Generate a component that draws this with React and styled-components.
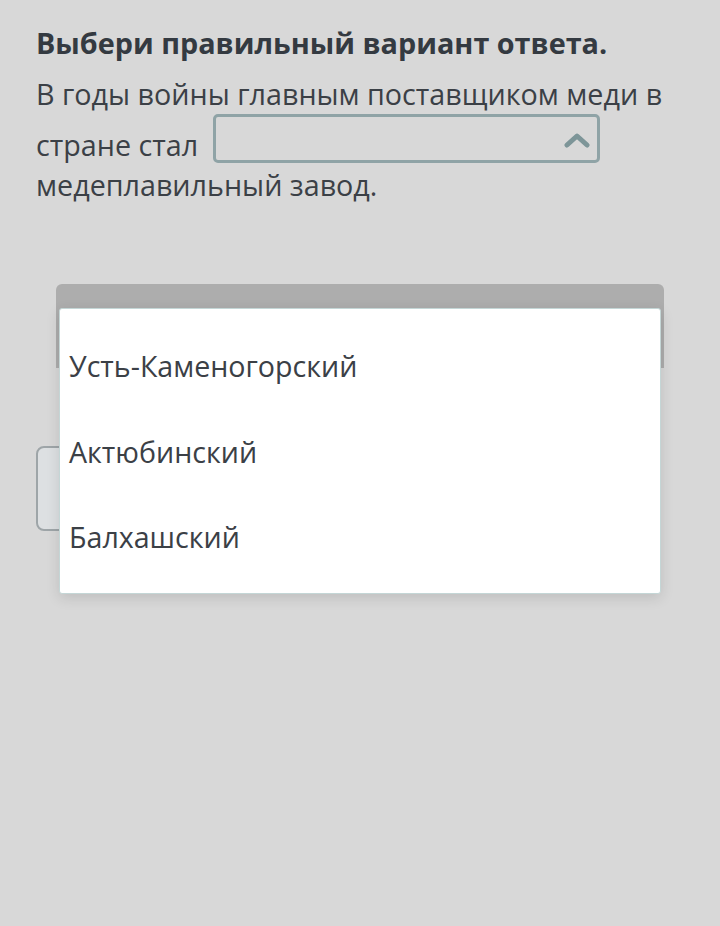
import { createGlobalStyle, styled } from 'styled-components';

const options = ['Усть-Каменогорский', 'Актюбинский', 'Балхашский'];

const Global = createGlobalStyle`
body {
  margin: 0;
  background: #d8d8d8;
  font-family: "Open Sans", "Noto Sans", sans-serif;
}
`;

const Page = styled.div`
min-height: 926px;
padding: 23px 0 0 0;
box-sizing: border-box;
`;

const Question = styled.div`
padding: 0 36px;
color: #3b4046;
`;

const Title = styled.h1`
margin: 0;
font-size: 28.8px;
font-weight: 700;
line-height: 40px;
color: #343a41;
`;

const Text = styled.p`
margin: 11px 0 0;
font-size: 28.7px;
line-height: 40px;
`;

const Select = styled.span`
display: inline-block;
overflow: hidden;
vertical-align: -7px;
box-sizing: border-box;
width: 387px;
height: 49px;
margin-left: 15px;
padding-right: 7px;
border: 3px solid #8fa3a6;
border-radius: 5px;
text-align: right;
line-height: 40px;

svg {
  vertical-align: middle;
}
`;

const Stage = styled.div`
position: relative;
margin-top: 79px;
`;

const Card = styled.div`
margin: 0 56px;
height: 84px;
border-radius: 6px 6px 0 0;
background: #adadad;
`;

const Box = styled.div`
margin: 78px 0 0 36px;
width: 400px;
height: 85px;
box-sizing: border-box;
border: 2px solid #9ea5a8;
border-radius: 8px;
background: #dde0e2;
`;

const Menu = styled.ul`
position: absolute;
top: 24px;
left: 59px;
width: 602px;
height: 286px;
box-sizing: border-box;
margin: 0;
padding: 14px 0;
list-style: none;
background: #fff;
border: 1px solid #c4d6d6;
border-radius: 3px;
box-shadow: 0 4px 14px rgba(0, 0, 0, 0.12);
`;

const Option = styled.li`
display: flex;
align-items: center;
height: 85.5px;
padding-left: 9px;
font-size: 28.6px;
color: #3b4046;
`;

const Chevron = () => (
  <svg width="26" height="16" viewBox="0 0 26 16">
    <polyline points="3,13 13,4 23,13" fill="none" stroke="#7d9598" strokeWidth="5" strokeLinecap="round" strokeLinejoin="round" />
  </svg>
);

const App = () => {
  return (
    <Page>
      <Global />
      <Question>
        <Title>Выбери правильный вариант ответа.</Title>
        <Text>
          В годы войны главным поставщиком меди в стране стал
          <Select><Chevron /></Select>
          {' '}медеплавильный завод.
        </Text>
      </Question>
      <Stage>
        <Card />
        <Box />
        <Menu>
          {options.map(o => <Option key={o}>{o}</Option>)}
        </Menu>
      </Stage>
    </Page>
  );
};

export default App;
